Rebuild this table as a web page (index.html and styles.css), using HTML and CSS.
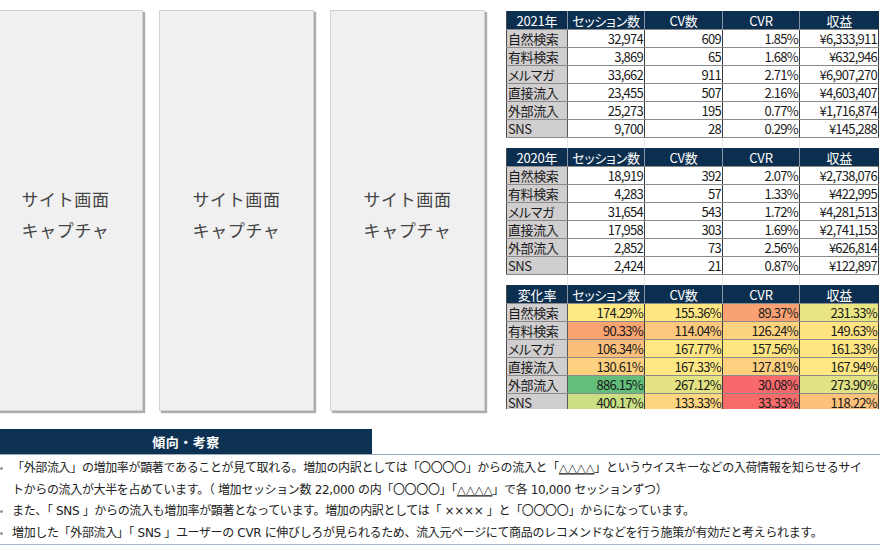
FILE: index.html
```html
<!DOCTYPE html>
<html lang="ja">
<head>
<meta charset="utf-8">
<title>流入分析</title>
<link rel="stylesheet" href="styles.css">
</head>
<body>
<div class="page">
  <div class="top">
    <div class="shots">
      <div class="shot"><p>サイト画面<br>キャプチャ</p></div>
      <div class="shot"><p>サイト画面<br>キャプチャ</p></div>
      <div class="shot"><p>サイト画面<br>キャプチャ</p></div>
    </div>
    <div class="tables">
      <table class="data">
        <colgroup><col class="c1"><col class="c2"><col class="c3"><col class="c4"><col class="c5"></colgroup>
        <thead><tr><th>2021年</th><th>セッション数</th><th>CV数</th><th>CVR</th><th>収益</th></tr></thead>
        <tbody>
          <tr><td class="lbl">自然検索</td><td>32,974</td><td>609</td><td>1.85%</td><td>¥6,333,911</td></tr>
          <tr><td class="lbl">有料検索</td><td>3,869</td><td>65</td><td>1.68%</td><td>¥632,946</td></tr>
          <tr><td class="lbl">メルマガ</td><td>33,662</td><td>911</td><td>2.71%</td><td>¥6,907,270</td></tr>
          <tr><td class="lbl">直接流入</td><td>23,455</td><td>507</td><td>2.16%</td><td>¥4,603,407</td></tr>
          <tr><td class="lbl">外部流入</td><td>25,273</td><td>195</td><td>0.77%</td><td>¥1,716,874</td></tr>
          <tr><td class="lbl">SNS</td><td>9,700</td><td>28</td><td>0.29%</td><td>¥145,288</td></tr>
        </tbody>
      </table>
      <table class="data">
        <colgroup><col class="c1"><col class="c2"><col class="c3"><col class="c4"><col class="c5"></colgroup>
        <thead><tr><th>2020年</th><th>セッション数</th><th>CV数</th><th>CVR</th><th>収益</th></tr></thead>
        <tbody>
          <tr><td class="lbl">自然検索</td><td>18,919</td><td>392</td><td>2.07%</td><td>¥2,738,076</td></tr>
          <tr><td class="lbl">有料検索</td><td>4,283</td><td>57</td><td>1.33%</td><td>¥422,995</td></tr>
          <tr><td class="lbl">メルマガ</td><td>31,654</td><td>543</td><td>1.72%</td><td>¥4,281,513</td></tr>
          <tr><td class="lbl">直接流入</td><td>17,958</td><td>303</td><td>1.69%</td><td>¥2,741,153</td></tr>
          <tr><td class="lbl">外部流入</td><td>2,852</td><td>73</td><td>2.56%</td><td>¥626,814</td></tr>
          <tr><td class="lbl">SNS</td><td>2,424</td><td>21</td><td>0.87%</td><td>¥122,897</td></tr>
        </tbody>
      </table>
      <table class="data heat">
        <colgroup><col class="c1"><col class="c2"><col class="c3"><col class="c4"><col class="c5"></colgroup>
        <thead><tr><th>変化率</th><th>セッション数</th><th>CV数</th><th>CVR</th><th>収益</th></tr></thead>
        <tbody>
          <tr><td class="lbl">自然検索</td><td style="background:#fee883">174.29%</td><td style="background:#fee582">155.36%</td><td style="background:#f9a172">89.37%</td><td style="background:#e9e583">231.33%</td></tr>
          <tr><td class="lbl">有料検索</td><td style="background:#f9a371">90.33%</td><td style="background:#fcc87d">114.04%</td><td style="background:#fdd27f">126.24%</td><td style="background:#fee382">149.63%</td></tr>
          <tr><td class="lbl">メルマガ</td><td style="background:#fbbe7b">106.34%</td><td style="background:#ffe884">167.77%</td><td style="background:#fee683">157.56%</td><td style="background:#fee683">161.33%</td></tr>
          <tr><td class="lbl">直接流入</td><td style="background:#fdd07f">130.61%</td><td style="background:#ffe884">167.33%</td><td style="background:#fdd07f">127.81%</td><td style="background:#ffe884">167.94%</td></tr>
          <tr><td class="lbl">外部流入</td><td style="background:#63be7b">886.15%</td><td style="background:#e3e383">267.12%</td><td style="background:#f8696b">30.08%</td><td style="background:#e0e283">273.90%</td></tr>
          <tr><td class="lbl">SNS</td><td style="background:#cadf81">400.17%</td><td style="background:#fdd480">133.33%</td><td style="background:#f86b6b">33.33%</td><td style="background:#fcc27c">118.22%</td></tr>
        </tbody>
      </table>
    </div>
  </div>
  <section class="notes">
    <div class="notes-head"><h2>傾向・考察</h2></div>
    <ul class="notes-list">
      <li>「外部流入」の増加率が顕著であることが見て取れる。増加の内訳としては「〇〇〇〇」からの流入と「<u>△△△△</u>」というウイスキーなどの入荷情報を知らせるサイ<br>トからの流入が大半を占めています。（ 増加セッション数 22,000 の内「〇〇〇〇」「<u>△△△△</u>」で各 10,000 セッションずつ）</li>
      <li>また、「 SNS 」からの流入も増加率が顕著となっています。増加の内訳としては「 ×××× 」と「〇〇〇〇」からになっています。</li>
      <li>増加した「外部流入」「 SNS 」ユーザーの CVR に伸びしろが見られるため、流入元ページにて商品のレコメンドなどを行う施策が有効だと考えられます。</li>
    </ul>
  </section>
</div>
</body>
</html>
```

FILE: styles.css
```css
html, body {
  margin: 0;
  padding: 0;
  background: #ffffff;
  overflow: hidden;
}

body {
  width: 880px;
  height: 550px;
  font-family: "Noto Sans CJK JP", "Noto Sans", sans-serif;
  color: #1e1e1e;
}

.page {
  display: flex;
  flex-direction: column;
}

.top {
  display: flex;
  padding-top: 10px;
  height: 402px;
}

.shots {
  display: flex;
  gap: 16px;
  margin-left: -12px;
}

.shot {
  box-sizing: border-box;
  width: 155px;
  height: 401px;
  background: #f0f0f0;
  border: 1px solid #d2d2d2;
  box-shadow: 2px 2px 1px #acacac;
  display: flex;
  align-items: center;
  justify-content: center;
}

.shot p {
  margin: 0;
  font-size: 17px;
  line-height: 31px;
  letter-spacing: 0.6px;
  color: #444444;
  text-align: center;
  padding-top: 6px;
}

.tables {
  margin-left: 21px;
  margin-top: 1px;
  height: 398px;
  overflow: hidden;
  display: flex;
  flex-direction: column;
  gap: 10px;
  background-image:
    linear-gradient(#e6e6e6, #e6e6e6),
    linear-gradient(#e6e6e6, #e6e6e6),
    linear-gradient(#e6e6e6, #e6e6e6),
    linear-gradient(#e6e6e6, #e6e6e6);
  background-size: 1px 100%;
  background-repeat: no-repeat;
  background-position: 61px 0, 138px 0, 216px 0, 293px 0;
}

.data {
  width: 372px;
  table-layout: fixed;
  border-collapse: collapse;
  font-size: 13px;
  font-feature-settings: "palt";
  background: #ffffff;
  border-left: 1px solid #4a4a4a;
  flex: none;
}

.data .c1 { width: 61px; }
.data .c2 { width: 77px; }
.data .c3 { width: 78px; }
.data .c4 { width: 77px; }
.data .c5 { width: 79px; }

.data th {
  height: 18px;
  padding: 0;
  background: #0d2f4f;
  color: #ffffff;
  font-weight: normal;
  line-height: 17px;
  text-align: center;
  border-left: 1px solid #8796a5;
  letter-spacing: -0.2px;
}

.data th:first-child {
  border-left: none;
}

.data td {
  height: 17px;
  padding: 0 1px 0 0;
  line-height: 16px;
  text-align: right;
  border-top: 1px solid #8a8a8a;
  border-bottom: 1px solid #8a8a8a;
  border-left: 1px solid #3c3c3c;
  border-right: 1px solid #3c3c3c;
  letter-spacing: -0.75px;
  white-space: nowrap;
  overflow: visible;
  color: #1a1a1a;
}

.data td.lbl {
  background: #d0cece;
  text-align: left;
  padding-left: 1px;
  letter-spacing: -0.4px;
  border-left: none;
  border-right: 1px solid #5a5a5a;
}

.notes {
  margin-top: 17px;
  border-bottom: 1px solid #a9b8c6;
}

.notes-head {
  border-bottom: 1px solid #9aacbd;
  display: flex;
}

.notes-head h2 {
  margin: 0;
  width: 372px;
  height: 25px;
  background: #0c3152;
  color: #ffffff;
  font-size: 13px;
  font-weight: bold;
  line-height: 25px;
  text-align: center;
  letter-spacing: 0.5px;
}

.notes-list {
  list-style: none;
  margin: 0;
  padding: 3px 0 0 0;
  font-family: "DejaVu Sans", "Noto Sans CJK JP", sans-serif;
  font-size: 12px;
  line-height: 21.6px;
  letter-spacing: -0.35px;
  color: #222222;
  white-space: nowrap;
}

.notes-list li {
  padding-left: 12px;
  background-image: radial-gradient(circle, #9a9a9a 1.2px, transparent 1.6px);
  background-size: 5px 5px;
  background-position: -1px 8px;
  background-repeat: no-repeat;
}

.notes-list u {
  text-decoration-color: #888888;
  text-underline-offset: 2px;
}
```
